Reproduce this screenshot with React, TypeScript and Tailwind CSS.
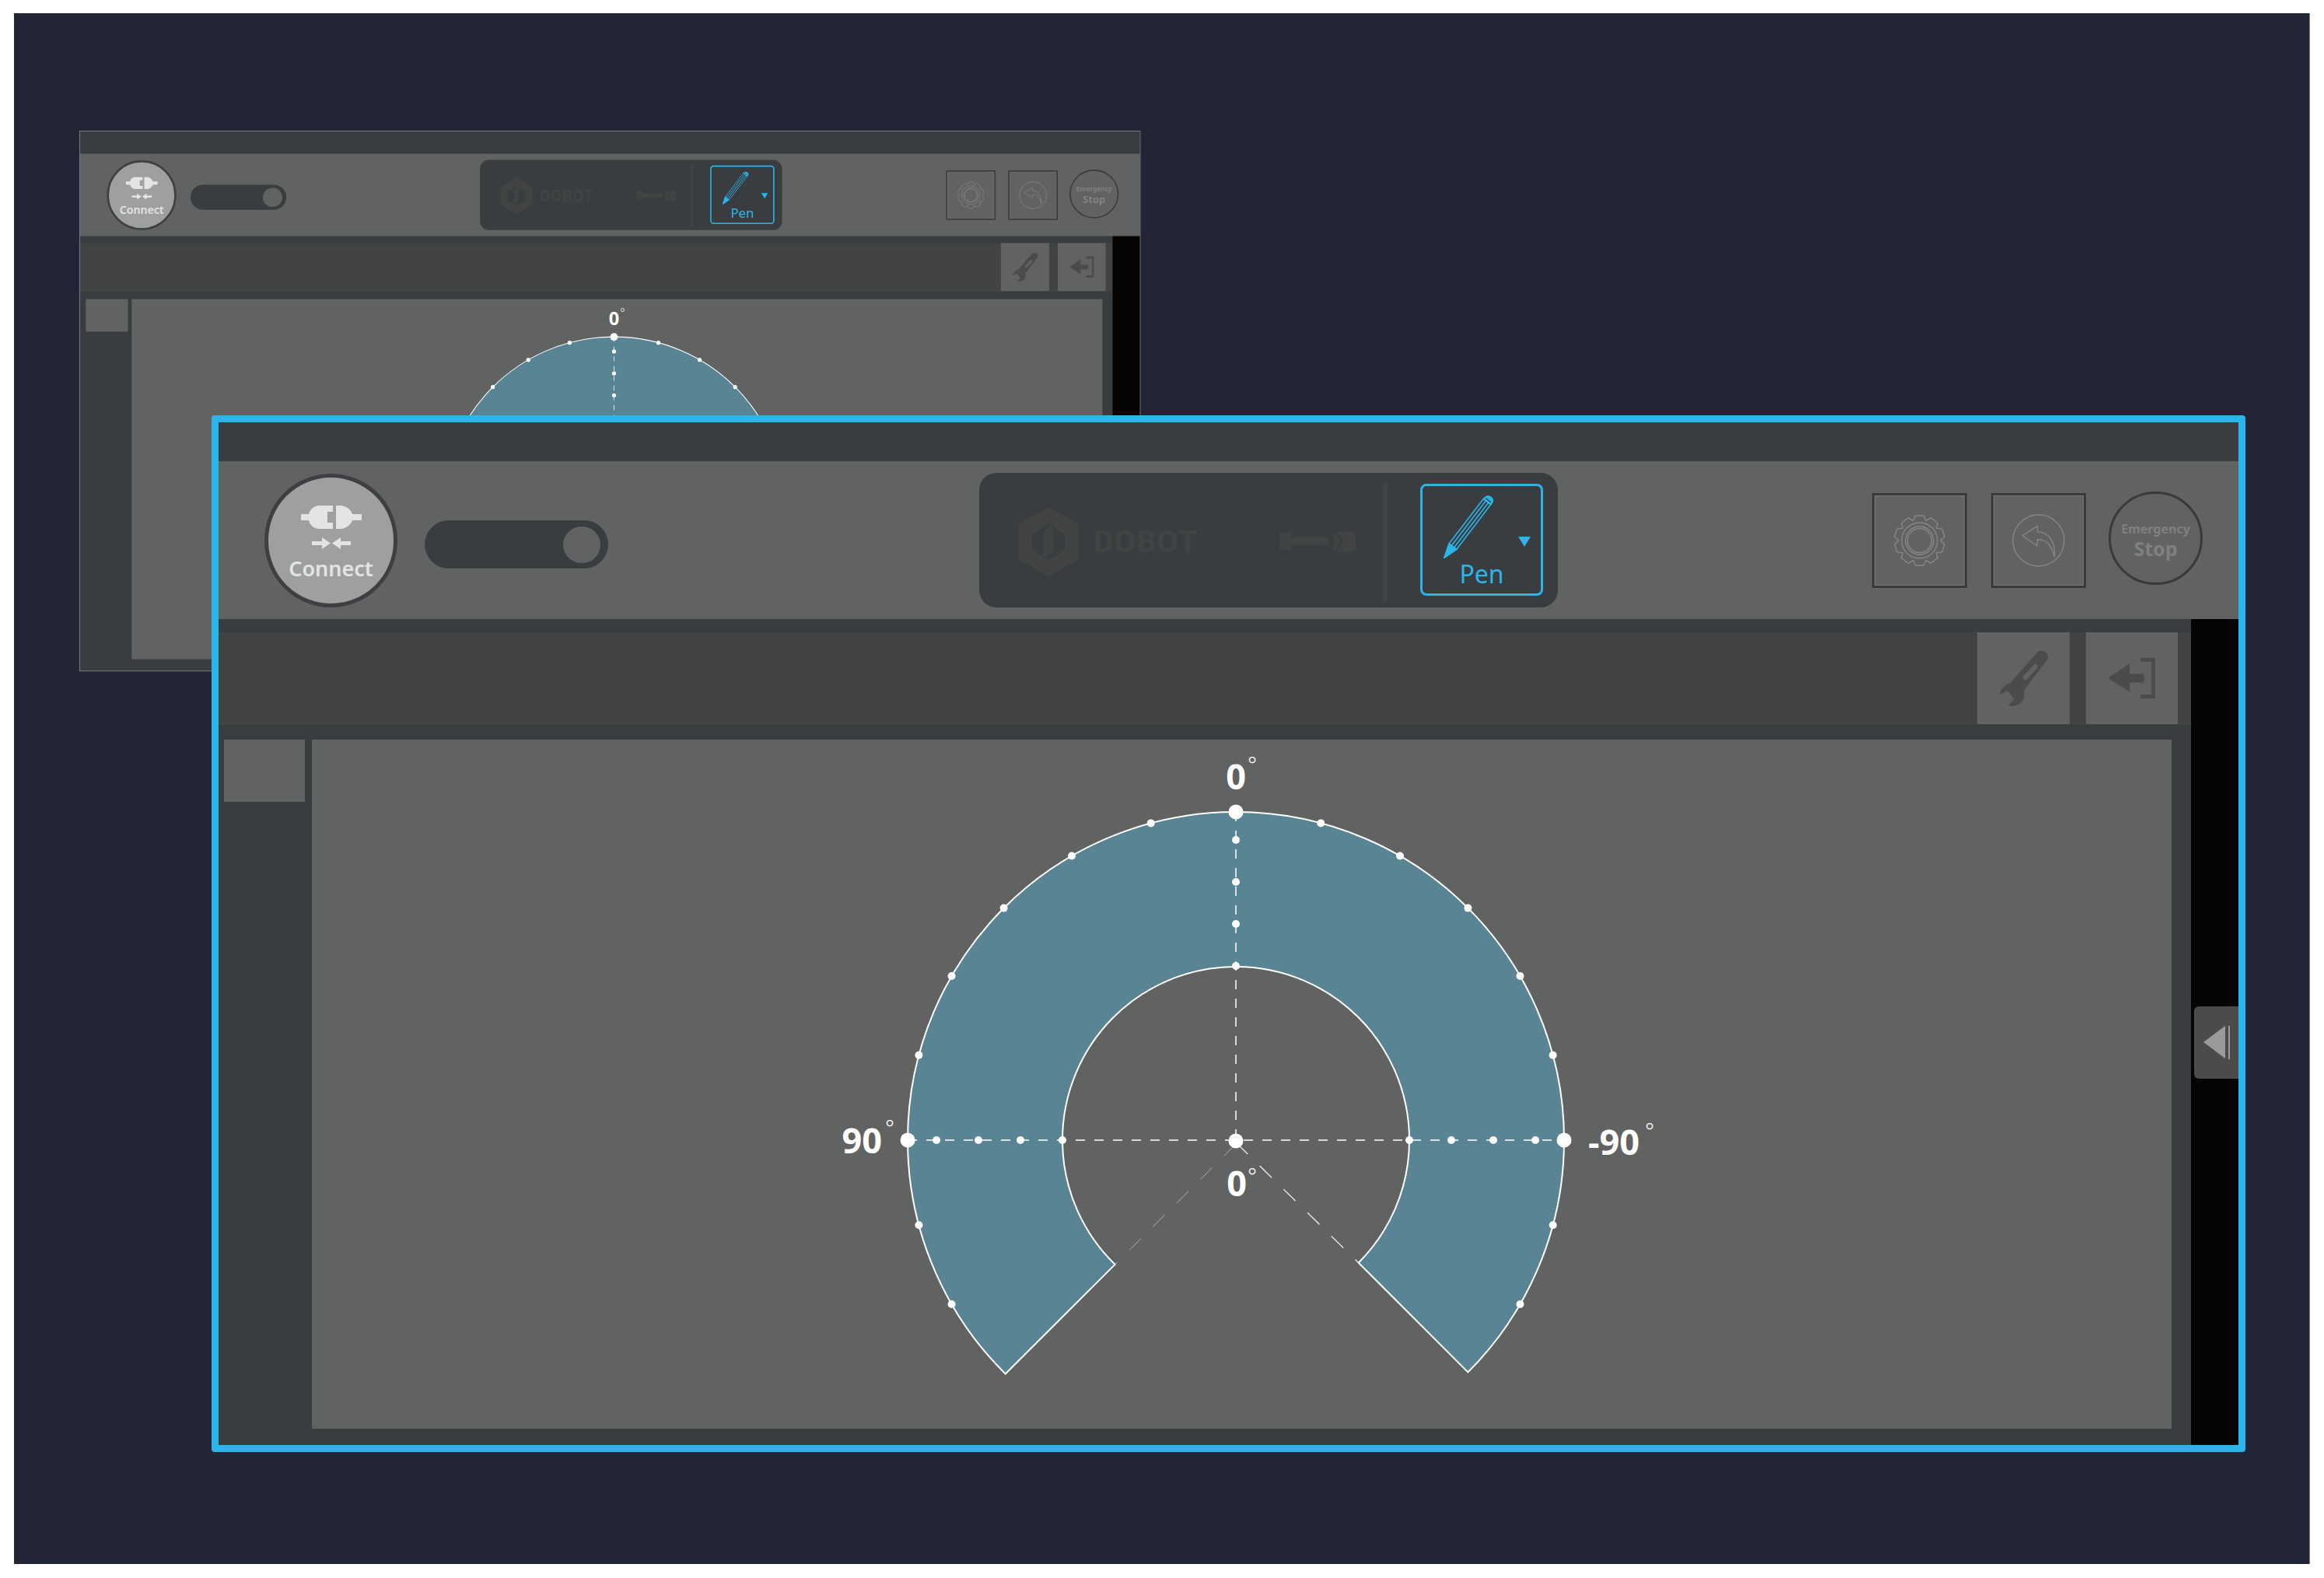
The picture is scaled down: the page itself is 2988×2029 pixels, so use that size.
const CX = 1188;
const CY = 515;
const R_OUT = 422;
const R_IN = 223;

const polar = (r: number, deg: number) => {
  const a = (deg * Math.PI) / 180;
  return { x: CX + r * Math.sin(a), y: CY - r * Math.cos(a) };
};

// gear outline, 10 teeth
const gearPath = () => {
  const pts: string[] = [];
  for (let i = 0; i < 10; i++) {
    const a = (i * 36 * Math.PI) / 180;
    const at = (r: number, d: number) =>
      `${(r * Math.sin(a + d)).toFixed(1)} ${(-r * Math.cos(a + d)).toFixed(1)}`;
    pts.push(at(27, -0.3), at(32.5, -0.17), at(32.5, 0.17), at(27, 0.3));
  }
  return 'M' + pts.join(' L') + ' Z';
};

const PlugIcon = () => (
  <svg viewBox="0 0 78 30" className="w-[78px] h-[30px]" fill="#e3e4e3">
    <path d="M2 11 H10 C12 4 17 0 24 0 H41 V8 H34 V22 H41 V30 H24 C17 30 12 26 10 19 H2 A4 4 0 0 1 2 11 Z" />
    <path d="M45 0 H50 C58 0 64 5 66 11 H76 A4 4 0 0 1 76 19 H66 C64 25 58 30 50 30 H45 Z" />
  </svg>
);

const ArrowsIcon = () => (
  <svg viewBox="0 0 50 15" className="w-[50px] h-[15px]" fill="#e3e4e3">
    <path d="M0 5 H13 V0 L24 7.5 L13 15 V10 H0 Z" />
    <path d="M50 5 H37 V0 L26 7.5 L37 15 V10 H50 Z" />
  </svg>
);

const PenIcon = () => (
  <svg viewBox="0 0 66 81" className="w-[66px] h-[81px]" fill="none" stroke="#2cb5ea" strokeWidth="1.6">
    <path d="M7.1 62 L50.9 4.9 L55 1.5 Q58 0 61 2.5 Q64 5 63 8 L60.5 12.1 L16.8 69.3 L1 80 Z" strokeLinejoin="round" />
    <path d="M10.4 64.5 L54.1 7.3 M13.6 66.9 L57.3 9.7" />
    <path d="M7.1 62 L16.8 69.3 L1 80 Z" fill="#2cb5ea" />
    <path d="M51.5 4.5 L55 1.5 Q58 0 61 2.5 Q64 5 63 8 L60.5 12 Z" fill="#2cb5ea" />
    <path d="M54 3.5 L61 9" stroke="#3a3d40" strokeWidth="1.4" />
  </svg>
);

const DobotLogo = () => (
  <svg viewBox="0 0 77 87" className="w-[77px] h-[87px]">
    <path d="M38.5 0 L77 21.7 V65 L38.5 87 L0 65 V21.7 Z" fill="#424443" stroke="#424443" strokeWidth="2" strokeLinejoin="round" />
    <path d="M38 20 L59 34 V55 L38 67 L17 55 V34 Z" fill="#3a3d40" />
    <path d="M42 20 L32 32 V58 L24 68 L44 56 V30 Z" fill="#424443" />
  </svg>
);

const DumbbellIcon = () => (
  <svg viewBox="0 0 97 26" className="w-[97px] h-[26px]" fill="#424443">
    <rect x="0" y="1" width="14" height="22" />
    <rect x="14" y="6" width="48" height="11" />
    <path d="M69 0 L78 12 L69 26 Z M72 0 H94 V2 H97 V24 H94 V26 H72 L81 12 Z" />
  </svg>
);

const GearIcon = () => (
  <svg viewBox="-36 -36 72 72" className="w-[72px] h-[72px]" fill="none" stroke="#858685" strokeWidth="1.4">
    <path d={gearPath()} strokeLinejoin="round" />
    <circle r="23" />
    <circle r="18" />
    <circle r="15.5" />
  </svg>
);

const UndoIcon = () => (
  <svg viewBox="-36 -36 72 72" className="w-[72px] h-[72px]" fill="none" stroke="#858685" strokeWidth="1.4">
    <circle r="33" />
    <path d="M-20.7 -6.3 L-1.4 -18.7 V-11.3 C12 -11 22 0 20.5 21 C17 6 10 -1.5 -1.4 -1.3 L-2 7 Z" strokeLinejoin="round" />
  </svg>
);

const WrenchIcon = () => (
  <svg viewBox="0 0 119 118" className="w-full h-full">
    <path
      d="M77 26 A8.5 8.5 0 0 1 91 34 L60 75 C62 82 60 90 52 93 C48 95 44 95 40 94 L48 86 L39 75 L29 80 C31 72 36 67 43 65 Z"
      fill="#4a4b4a"
    />
    <path d="M62 58 L75 44" stroke="#616362" strokeWidth="6" strokeLinecap="round" />
  </svg>
);

const ExitIcon = () => (
  <svg viewBox="0 0 118 118" className="w-full h-full" fill="#4a4b4a">
    <path d="M29 59 L55.7 41 V54 H74 V64 H55.7 V76 Z" strokeLinejoin="round" stroke="#4a4b4a" strokeWidth="1" />
    <path d="M70 33 H89 V85 H70 V80 H84 V38 H70 Z" />
  </svg>
);

const Gauge = () => {
  const oa = polar(R_OUT, -135.4);
  const ob = polar(R_OUT, 135);
  const ia = polar(R_IN, -135.8);
  const ib = polar(R_IN, 135);
  const ticks = [-120, -105, -75, -60, -45, -30, -15, 15, 30, 45, 60, 75, 105, 120];
  const radial = [278, 332, 386];

  return (
    <svg viewBox="0 0 2391 886" className="w-[2391px] h-[886px]">
      <path
        d={`M${oa.x} ${oa.y} A${R_OUT} ${R_OUT} 0 1 1 ${ob.x} ${ob.y} L${ib.x} ${ib.y} A${R_IN} ${R_IN} 0 1 0 ${ia.x} ${ia.y} Z`}
        fill="#598494"
        stroke="#ffffff"
        strokeWidth="2"
      />
      <g stroke="#ffffff" strokeWidth="1.5" strokeDasharray="12 12">
        <path d={`M${CX} ${CY - R_OUT} V${CY}`} />
        <path d={`M${CX - R_OUT} ${CY} H${CX + R_OUT}`} />
      </g>
      <path d={`M${CX} ${CY + 5} L${ia.x} ${ia.y}`} stroke="#ffffff" strokeOpacity="0.5" strokeWidth="1" strokeDasharray="21.5 21.5" />
      <path d={`M${CX} ${CY + 3} L${ib.x} ${ib.y}`} stroke="#ffffff" strokeOpacity="0.8" strokeWidth="1.5" strokeDasharray="21.5 21.5" />
      <g fill="#ffffff">
        {ticks.map((t) => {
          const p = polar(R_OUT, t);
          return <circle key={t} cx={p.x} cy={p.y} r="5" />;
        })}
        <circle cx={CX} cy={CY - R_IN - 1} r="5" />
        <circle cx={CX - R_IN} cy={CY} r="5" />
        <circle cx={CX + R_IN} cy={CY} r="5" />
        {radial.map((r) => (
          <g key={r}>
            <circle cx={CX} cy={CY - r} r="5" />
            <circle cx={CX - r + 1} cy={CY} r="5" />
            <circle cx={CX + r - 1} cy={CY} r="5" />
          </g>
        ))}
        <circle cx={CX} cy={CY - R_OUT} r="9.5" />
        <circle cx={CX - R_OUT} cy={CY} r="9.5" />
        <circle cx={CX + R_OUT} cy={CY} r="9.5" />
        <circle cx={CX} cy={CY + 1} r="9.5" />
      </g>
      <g fill="#ffffff" className="font-['Noto_Sans',sans-serif]">
        <g fontSize="45" fontWeight="700">
          <text x={CX} y="64" textAnchor="middle">0</text>
          <text x="733" y="532" textAnchor="end">90</text>
          <text x="1641" y="534">-90</text>
          <text x="1189" y="587" textAnchor="middle">0</text>
        </g>
        <g fontSize="28" fontWeight="300" textAnchor="middle">
          <text x="1209" y="42">°</text>
          <text x="743" y="509">°</text>
          <text x="1720" y="513">°</text>
          <text x="1209" y="571">°</text>
        </g>
      </g>
    </svg>
  );
};

interface WindowProps {
  back?: boolean;
}

const AppWindow = ({ back }: WindowProps) => (
  <div className={`flex flex-col bg-[#3a3d40] ${back ? 'w-[2610px] h-[1328px]' : 'w-[2597px] h-[1315px]'}`}>
    <div className={`shrink-0 bg-[#3a3d40] ${back ? 'h-[55px]' : 'h-[50px]'}`} />

    {/* Toolbar */}
    <div className={`shrink-0 h-[203px] bg-[#616362] flex items-start ${back ? 'pl-[66px]' : 'pl-[59px]'}`}>
      <div className="mt-[16px] w-[171px] h-[172px] shrink-0 rounded-full bg-[#9ea09f] border-[5px] border-[#3d3f42] flex flex-col items-center pt-[36px]">
        <PlugIcon />
        <div className="mt-[11px]">
          <ArrowsIcon />
        </div>
        <span className="mt-[9px] text-[27px] leading-[32px] font-semibold text-[#e3e4e3]" style={{ fontFamily: '"Noto Sans", sans-serif' }}>
          Connect
        </span>
      </div>
      <div className="ml-[35px] mt-[76px] w-[236px] h-[62px] shrink-0 rounded-full bg-[#3a3d40] flex items-center justify-end pr-[10px]">
        <div className="w-[48px] h-[47px] rounded-full bg-[#616362]" />
      </div>

      <div className="ml-[477px] mt-[15px] w-[744px] h-[173px] shrink-0 rounded-[22px] bg-[#3a3d40] flex items-center pt-[4px]">
        <div className="ml-[51px]">
          <DobotLogo />
        </div>
        <span className="ml-[19px] w-[131px] text-[39px] leading-[40px] font-bold tracking-[1.5px] text-[#424443] font-['Roboto',sans-serif]">
          DOBOT
        </span>
        <div className="ml-[109px]">
          <DumbbellIcon />
        </div>
        <div className="ml-[35px] w-[6px] h-[152px] bg-[#424443]" />
        <div className="ml-[42px] -mt-[6px] w-[158px] h-[144px] rounded-[8px] border-[3px] border-[#2cb5ea] flex flex-col">
          <div className="flex items-start pl-[27px] pt-[12px]">
            <PenIcon />
            <div className="ml-[30px] mt-[53px] w-0 h-0 border-l-[8px] border-r-[8px] border-t-[13px] border-l-transparent border-r-transparent border-t-[#2cb5ea]" />
          </div>
          <span className="mt-[2px] text-center text-[32px] leading-[36px] text-[#2cb5ea] font-['Noto_Sans',sans-serif]">Pen</span>
        </div>
      </div>

      <div className="ml-[404px] mt-[41px] w-[122px] h-[122px] shrink-0 border-[3px] border-[#3c3a38] shadow-[inset_0_0_0_1px_#777877] flex items-center justify-center">
        <GearIcon />
      </div>
      <div className="ml-[31px] mt-[41px] w-[122px] h-[122px] shrink-0 border-[3px] border-[#3c3a38] shadow-[inset_0_0_0_1px_#777877] flex items-center justify-center">
        <UndoIcon />
      </div>
      <div className="ml-[29px] mt-[39px] w-[121px] h-[120px] shrink-0 rounded-full border-[3px] border-[#3c3a38] flex flex-col items-center justify-center pt-[5px] text-[#7f807f] font-bold font-['Noto_Sans',sans-serif]">
        <span className="text-[16px] leading-[20px]">Emergency</span>
        <span className="text-[25px] leading-[30px]">Stop</span>
      </div>
    </div>

    <div className="flex-1 flex min-h-0">
      <div className={`flex-1 flex flex-col min-w-0 ${back ? 'pb-[28px]' : 'pb-[21px]'}`}>
        <div className="shrink-0 h-[17px]" />
        <div className="shrink-0 h-[119px] bg-[#424443] flex justify-end pr-[17px]">
          <div className="w-[119px] h-[118px] bg-[#616362]">
            <WrenchIcon />
          </div>
          <div className="ml-[21px] w-[118px] h-[118px] bg-[#616362]">
            <ExitIcon />
          </div>
        </div>
        <div className="shrink-0 h-[19px]" />
        <div className={`flex-1 flex min-h-0 ${back ? 'pl-[7px]' : ''}`}>
          <div className="w-[120px] shrink-0 pl-[7px]">
            <div className="w-[104px] h-[80px] bg-[#616362]" />
          </div>
          <div className="w-[2391px] bg-[#616362] overflow-hidden">
            <Gauge />
          </div>
        </div>
      </div>
      {/* Black side drawer with its handle */}
      <div className={`shrink-0 bg-[#060303] flex items-center justify-end ${back ? 'w-[67px]' : 'w-[61px]'}`}>
        {!back && (
          <div className="mt-[26px] w-[57px] h-[93px] rounded-l-[6px] bg-[#4b4b4b] flex items-center pl-[12px]">
            <div className="w-0 h-0 border-t-[21px] border-b-[21px] border-r-[28px] border-t-transparent border-b-transparent border-r-[#9a9a9a]" />
            <div className="ml-[4px] w-[2px] h-[43px] bg-[#9a9a9a]" />
          </div>
        )}
      </div>
    </div>
  </div>
);

const App = () => {
  return (
    <div className="w-[2988px] h-[2029px] bg-white pl-[18px] pt-[17px] overflow-hidden">
      <div className="relative w-[2952px] h-[1994px] bg-[#212536] border-r border-[#7f8088]">
        {/* Dimmed window behind */}
        <div className="absolute left-[85px] top-[152px] origin-top-left scale-[0.522] shadow-[0_0_0_2px_#77797b]">
          <AppWindow back />
        </div>
        {/* Highlighted window */}
        <div className="absolute left-[254px] top-[517px] border-[9px] border-[#2cb5ea] rounded-[4px]">
          <AppWindow />
        </div>
      </div>
    </div>
  );
};

export default App;
